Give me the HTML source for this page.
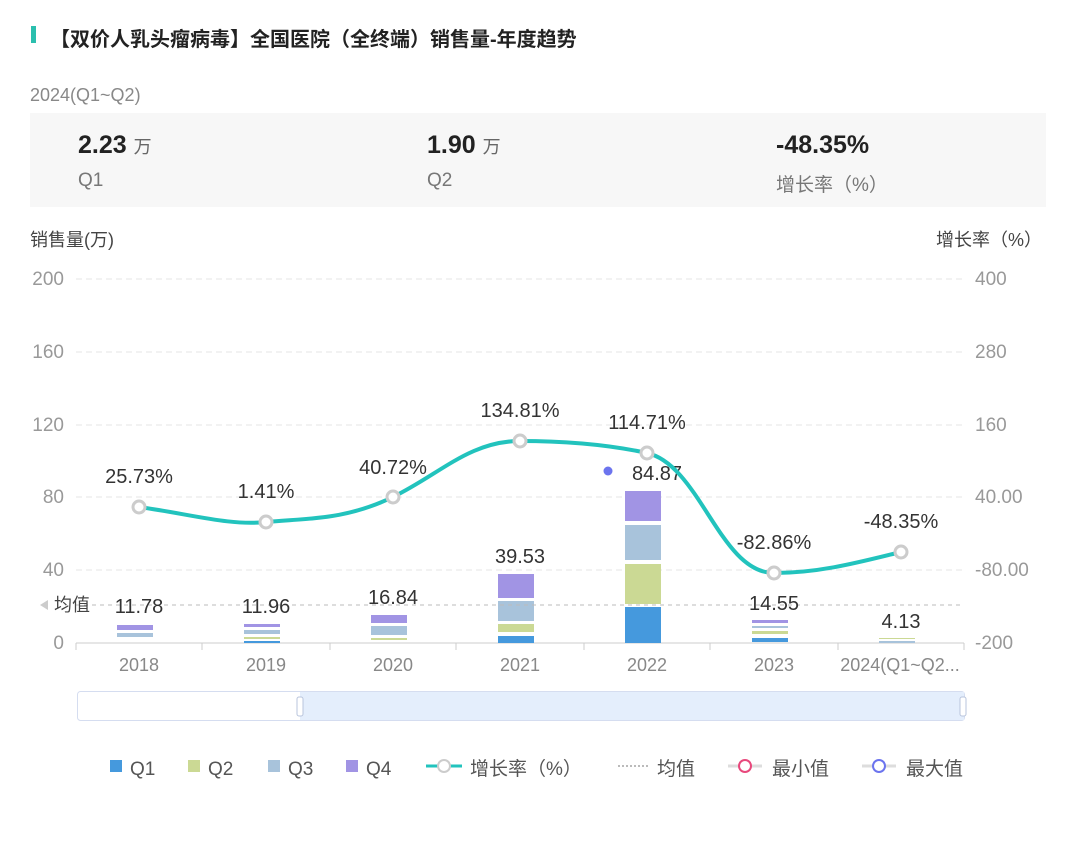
<!DOCTYPE html>
<html><head><meta charset="utf-8"><style>
body{margin:0;width:1080px;height:851px;background:#fff;font-family:"Liberation Sans","Noto Sans CJK SC",sans-serif;position:relative;overflow:hidden}
.a{position:absolute;white-space:nowrap}
</style></head><body>
<div class="a" style="left:31px;top:26px;width:5px;height:17px;background:#2bbfae"></div>
<div class="a" style="left:50px;top:23px;font-size:20px;font-weight:bold;color:#222">【双价人乳头瘤病毒】全国医院（全终端）销售量-年度趋势</div>
<div class="a" style="left:30px;top:85px;font-size:18px;color:#888">2024(Q1~Q2)</div>
<div class="a" style="left:30px;top:113px;width:1016px;height:94px;background:#f7f7f7"></div>
<div class="a" style="left:78px;top:131px;font-size:25px;font-weight:bold;color:#222">2.23 <span style="font-size:18px;font-weight:normal;color:#666">万</span></div>
<div class="a" style="left:78px;top:170px;font-size:19px;color:#777">Q1</div>
<div class="a" style="left:427px;top:131px;font-size:25px;font-weight:bold;color:#222">1.90 <span style="font-size:18px;font-weight:normal;color:#666">万</span></div>
<div class="a" style="left:427px;top:170px;font-size:19px;color:#777">Q2</div>
<div class="a" style="left:776px;top:131px;font-size:25px;font-weight:bold;color:#222">-48.35%</div>
<div class="a" style="left:776px;top:170px;font-size:19px;color:#777">增长率（%）</div>
<div class="a" style="left:30px;top:226px;font-size:18px;color:#444">销售量(万)</div>
<div class="a" style="left:936px;top:226px;font-size:18px;color:#444">增长率（%）</div>
<svg class="a" style="left:0;top:0" width="1080" height="851" font-family="Liberation Sans,Noto Sans CJK SC,sans-serif">
<g stroke="#e6e6e6" stroke-dasharray="6,4">
<line x1="76" y1="279" x2="964" y2="279"/><line x1="76" y1="352" x2="964" y2="352"/><line x1="76" y1="425" x2="964" y2="425"/><line x1="76" y1="497" x2="964" y2="497"/><line x1="76" y1="570" x2="964" y2="570"/>
</g>
<g font-size="19" fill="#999" text-anchor="end"><text x="64" y="285">200</text><text x="64" y="358">160</text><text x="64" y="431">120</text><text x="64" y="503">80</text><text x="64" y="576">40</text><text x="64" y="649">0</text></g>
<g font-size="19" fill="#999"><text x="975" y="285">400</text><text x="975" y="358">280</text><text x="975" y="431">160</text><text x="975" y="503">40.00</text><text x="975" y="576">-80.00</text><text x="975" y="649">-200</text></g>
<line x1="76" y1="643" x2="964" y2="643" stroke="#ccc"/>
<g stroke="#ccc"><line x1="76" y1="643" x2="76" y2="650"/><line x1="202" y1="643" x2="202" y2="650"/><line x1="330" y1="643" x2="330" y2="650"/><line x1="456" y1="643" x2="456" y2="650"/><line x1="584" y1="643" x2="584" y2="650"/><line x1="710" y1="643" x2="710" y2="650"/><line x1="838" y1="643" x2="838" y2="650"/><line x1="964" y1="643" x2="964" y2="650"/></g>
<g font-size="18" fill="#888" text-anchor="middle"><text x="139" y="671">2018</text><text x="266" y="671">2019</text><text x="393" y="671">2020</text><text x="520" y="671">2021</text><text x="647" y="671">2022</text><text x="774" y="671">2023</text><text x="900" y="671">2024(Q1~Q2...</text></g>
<g>
<rect x="117" y="625" width="36" height="5" fill="#a194e4"/><rect x="117" y="633" width="36" height="4" fill="#a8c3db"/>
<rect x="244" y="624" width="36" height="3" fill="#a194e4"/><rect x="244" y="630" width="36" height="4" fill="#a8c3db"/><rect x="244" y="637" width="36" height="2" fill="#cbd994"/><rect x="244" y="641" width="36" height="2" fill="#4599dd"/>
<rect x="371" y="615" width="36" height="8" fill="#a194e4"/><rect x="371" y="626" width="36" height="9" fill="#a8c3db"/><rect x="371" y="638" width="36" height="2" fill="#cbd994"/>
<rect x="498" y="574" width="36" height="24" fill="#a194e4"/><rect x="498" y="601" width="36" height="20" fill="#a8c3db"/><rect x="498" y="624" width="36" height="8" fill="#cbd994"/><rect x="498" y="636" width="36" height="7" fill="#4599dd"/>
<rect x="625" y="491" width="36" height="30" fill="#a194e4"/><rect x="625" y="525" width="36" height="35" fill="#a8c3db"/><rect x="625" y="564" width="36" height="40" fill="#cbd994"/><rect x="625" y="607" width="36" height="36" fill="#4599dd"/>
<rect x="752" y="620" width="36" height="3" fill="#a194e4"/><rect x="752" y="626" width="36" height="2" fill="#a8c3db"/><rect x="752" y="631" width="36" height="3" fill="#cbd994"/><rect x="752" y="638" width="36" height="4" fill="#4599dd"/>
<rect x="879" y="638" width="36" height="1" fill="#cbd994"/><rect x="879" y="641" width="36" height="2" fill="#a8c3db"/>
</g>
<line x1="76" y1="605" x2="964" y2="605" stroke="#bbb" stroke-dasharray="4,4"/>
<path d="M40 605 L48 600 L48 610Z" fill="#ccc"/>
<text x="54" y="611" font-size="18" fill="#444">均值</text>
<g font-size="20" fill="#333" text-anchor="middle"><text x="139" y="613">11.78</text><text x="266" y="613">11.96</text><text x="393" y="604">16.84</text><text x="520" y="563">39.53</text><text x="657" y="480">84.87</text><text x="774" y="610">14.55</text><text x="901" y="628">4.13</text>
<text x="139" y="483">25.73%</text><text x="266" y="498">1.41%</text><text x="393" y="474">40.72%</text><text x="520" y="417">134.81%</text><text x="647" y="429">114.71%</text><text x="774" y="549">-82.86%</text><text x="901" y="528">-48.35%</text></g>
<circle cx="608" cy="471" r="4.5" fill="#6c74ee"/>
<path d="M139 507 C190 514,230 526,266 522 C310 518,345 520,393 497 C440 474,470 441,520 441 C570 441,610 445,647 453 C700 465,720 573,774 573 C820 573,860 562,901 552" fill="none" stroke="#22c3bd" stroke-width="4"/>
<g fill="#fff" stroke="#ccc" stroke-width="3"><circle cx="139" cy="507" r="6"/><circle cx="266" cy="522" r="6"/><circle cx="393" cy="497" r="6"/><circle cx="520" cy="441" r="6"/><circle cx="647" cy="453" r="6"/><circle cx="774" cy="573" r="6"/><circle cx="901" cy="552" r="6"/></g>
<rect x="77.5" y="691.5" width="887" height="29" fill="#fff" stroke="#d5ddf0" rx="3"/>
<rect x="300" y="692" width="664" height="28" fill="#e4eefc"/>
<rect x="297" y="697" width="6" height="19" rx="2" fill="#fff" stroke="#b8c4dc"/>
<rect x="960" y="697" width="6" height="19" rx="2" fill="#fff" stroke="#b8c4dc"/>
<g font-size="19" fill="#555">
<rect x="110" y="760" width="12" height="12" fill="#4599dd"/><text x="130" y="775">Q1</text>
<rect x="188" y="760" width="12" height="12" fill="#cbd994"/><text x="208" y="775">Q2</text>
<rect x="268" y="760" width="12" height="12" fill="#a8c3db"/><text x="288" y="775">Q3</text>
<rect x="346" y="760" width="12" height="12" fill="#a194e4"/><text x="366" y="775">Q4</text>
<line x1="426" y1="766" x2="462" y2="766" stroke="#22c3bd" stroke-width="3"/><circle cx="444" cy="766" r="6" fill="#fff" stroke="#ccc" stroke-width="2"/><text x="470" y="775">增长率（%）</text>
<line x1="618" y1="766" x2="650" y2="766" stroke="#bbb" stroke-dasharray="2,2" stroke-width="2"/><text x="657" y="775">均值</text>
<line x1="728" y1="766" x2="762" y2="766" stroke="#ddd" stroke-width="3"/><circle cx="745" cy="766" r="6" fill="#fff" stroke="#e8487c" stroke-width="2"/><text x="772" y="775">最小值</text>
<line x1="862" y1="766" x2="896" y2="766" stroke="#ddd" stroke-width="3"/><circle cx="879" cy="766" r="6" fill="#fff" stroke="#6c74ee" stroke-width="2"/><text x="906" y="775">最大值</text>
</g>
</svg>
</body></html>
